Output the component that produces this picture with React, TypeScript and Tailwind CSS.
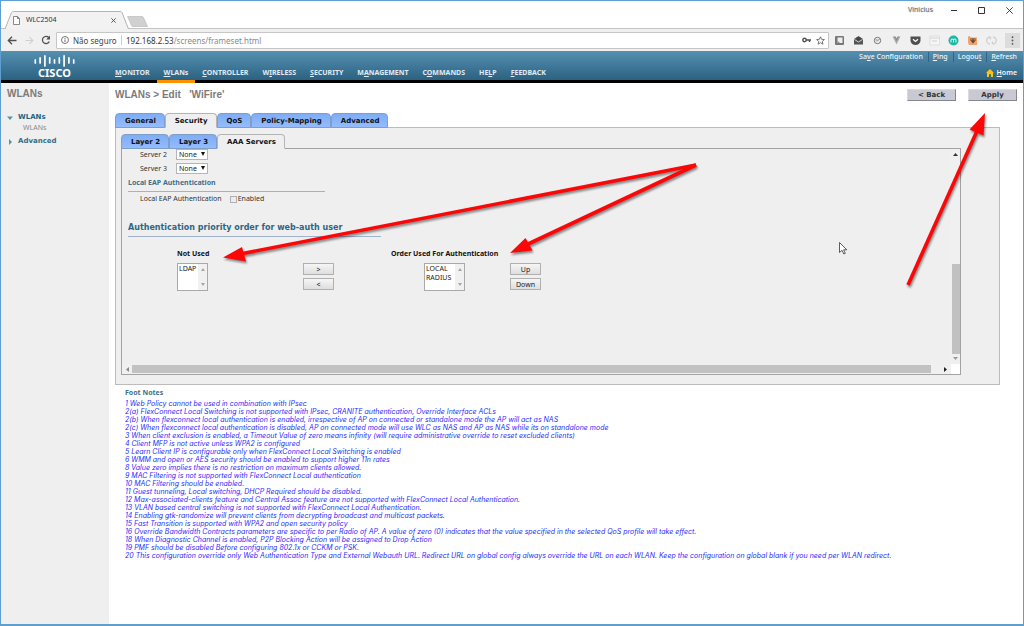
import type { ReactNode } from "react";

const sans = "font-['Noto_Sans','Open_Sans',sans-serif]";
const wide = "font-['DejaVu_Sans',sans-serif]";

function Accel({ text, at }: { text: string; at: number }) {
  return (
    <>
      {text.slice(0, at)}
      <u>{text[at]}</u>
      {text.slice(at + 1)}
    </>
  );
}

function IconButton({ label, children, className = "" }: { label: string; children: ReactNode; className?: string }) {
  return (
    <button aria-label={label} className={`flex shrink-0 items-center justify-center ${className}`}>
      {children}
    </button>
  );
}

function TitleBar() {
  return (
    <div className="relative flex h-[27px] items-end bg-white">
      <div className="relative z-10 ml-1 -mb-px flex h-[18px] w-[124px] items-center pl-2 pr-3">
        <svg className="absolute inset-0 h-full w-full" viewBox="0 0 124 18" preserveAspectRatio="none" aria-hidden="true">
          <path d="M0 18 L6.500 1.500 Q7 .5 8.500 .5 H115 Q116.500 .5 117 1.500 L123.500 18" fill="#f2f2f2" stroke="#b4b4b4" />
        </svg>
        <svg className="relative h-[9px] w-[7px]" viewBox="0 0 7 9" aria-hidden="true">
          <path d="M.5.5H4.500L6.500 2.500V8.500H.5ZM4.500.5V2.500H6.500" fill="#fff" stroke="#6b6b6b" strokeWidth=".8" />
        </svg>
        <span className="relative ml-1.5 flex-1 text-[7px] leading-[10px] text-[#333]">WLC2504</span>
        <IconButton label="Close tab" className="relative h-2 w-2">
          <svg className="h-[5px] w-[5px]" viewBox="0 0 5 5"><path d="M.4.4 4.600 4.600M4.600.4.4 4.600" stroke="#555" /></svg>
        </IconButton>
      </div>
      <IconButton label="New tab" className="mb-px ml-[-2px] h-[11px] w-[21px]">
        <svg className="h-[11px] w-[21px]" viewBox="0 0 21 11">
          <path d="M.5.5H15Q16 .5 16.500 1.500L20.500 10.500H6Q5 10.500 4.500 9.500Z" fill="#d0d0d0" stroke="#bcbcbc" strokeWidth=".7" />
        </svg>
      </IconButton>
      <div className="mb-[12px] ml-auto flex items-center">
        <span className="mr-[18px] text-[7px] leading-[10px] text-[#666] [text-shadow:0_0_2px_#bbb]">Vinicius</span>
        <IconButton label="Minimize" className="h-3 w-[6px]">
          <svg className="h-[7px] w-[6px]" viewBox="0 0 6 7"><path d="M0 3.500H6" stroke="#333" /></svg>
        </IconButton>
        <IconButton label="Maximize" className="ml-[21px] h-3 w-[7px]">
          <svg className="h-[7px] w-[7px]" viewBox="0 0 7 7"><path d="M.5.5H6.500V6.500H.5Z" fill="none" stroke="#333" /></svg>
        </IconButton>
        <IconButton label="Close" className="ml-[21px] mr-[10px] h-3 w-[7px]">
          <svg className="h-[7px] w-[7px]" viewBox="0 0 7 7"><path d="M.3.3 6.700 6.700M6.700.3.3 6.700" stroke="#333" strokeWidth=".9" /></svg>
        </IconButton>
      </div>
    </div>
  );
}

const extensions: { label: string; art: ReactNode }[] = [
  { label: "Notes", art: <><rect x="1" y="1" width="9" height="9" rx="1" fill="#777" /><rect x="3.500" y="2.500" width="5" height="5.500" fill="#eee" /><path d="M3.500 5.500 6 8H3.500Z" fill="#999" /></> },
  { label: "Mail", art: <><path d="M1 4 5.500 1 10 4V9.500H1Z" fill="#555" /><path d="M1.500 4.500 5.500 7 9.500 4.500" fill="none" stroke="#eee" strokeWidth=".8" /><path d="M3.500 2.500H7.500V4.500L5.500 5.800 3.500 4.500Z" fill="#444" /></> },
  { label: "Speed", art: <><circle cx="5.500" cy="5.500" r="3.200" fill="none" stroke="#777" /><path d="M5 6.500 7.500 4M3.500 5H5.500" stroke="#777" strokeWidth=".9" /></> },
  { label: "Vue", art: <><path d="M1.500 1.500H4L5.500 4.500 7 1.500H9.500L5.500 9.500Z" fill="#aaa" /><path d="M3.200 1.500H4.500L5.500 3.500 6.500 1.500H7.800L5.500 6Z" fill="#888" /></> },
  { label: "Pocket", art: <><path d="M.5 1.500H10.500V5.500A5 4.500 0 0 1 .5 5.500Z" fill="#505050" /><path d="M3 4.200 5.500 6.500 8 4.200" fill="none" stroke="#fff" strokeWidth="1.200" /></> },
  { label: "Calendar", art: <><rect x="1" y="1" width="9.500" height="9" fill="#f6f6f6" stroke="#d4d4d4" strokeWidth=".6" /><path d="M1 3H10.500M3 6H8" stroke="#d0d0d0" /></> },
  { label: "Momentum", art: <><circle cx="5.500" cy="5.500" r="5" fill="#1bb8a4" /><path d="M3 7.500V5Q3 4 4.200 4T5.500 5V7.500M5.500 5Q5.500 4 6.800 4T8 5V7.500" fill="none" stroke="#fff" strokeWidth=".9" /></> },
  { label: "Postbox", art: <><path d="M1 1.500 2.500 1 4 2.500H10V10H2L1 8Z" fill="#eba56c" /><path d="M3.500 3.500H8.500V5.500L6 8.500 3.500 5.500Z" fill="#6b3d2a" /><path d="M4.300 4.800H5.300M6.700 4.800H7.700" stroke="#fff" strokeWidth=".8" /></> },
  { label: "Sync", art: <path d="M4.500 2A3.500 3.500 0 0 0 4 9M6.500 9A3.500 3.500 0 0 0 7 2M4.500 2V4.500M6.500 9V6.500" fill="none" stroke="#cfcfcf" strokeWidth="1.300" /> },
];

function Toolbar() {
  return (
    <div className="flex h-[23px] items-center border-t border-[#c4c4c4] bg-[#f0f0f0] pl-[5px] pr-[3px]">
      <IconButton label="Back" className="h-3 w-[11px]">
        <svg className="h-[9px] w-[10px]" viewBox="0 0 10 9"><path d="M9.500 4.500H1.500M5 .8 1.300 4.500 5 8.200" fill="none" stroke="#505050" strokeWidth="1.300" /></svg>
      </IconButton>
      <IconButton label="Forward" className="ml-[7px] h-3 w-[11px]">
        <svg className="h-[9px] w-[9px]" viewBox="0 0 10 9"><path d="M.5 4.500H8.500M5 .8 8.700 4.500 5 8.200" fill="none" stroke="#cfcfcf" strokeWidth="1.200" /></svg>
      </IconButton>
      <IconButton label="Reload" className="ml-[5px] h-3 w-[11px]">
        <svg className="h-[10px] w-[10px]" viewBox="0 0 10 10"><path d="M8.300 6.500A3.600 3.600 0 1 1 7.700 2.500" fill="none" stroke="#505050" strokeWidth="1.300" /><path d="M9 .6V4.400H5.200Z" fill="#505050" /></svg>
      </IconButton>
      <div className="ml-[5px] flex h-[17px] flex-1 items-center rounded-[1px] border border-[#c6c6c6] bg-white pl-1 pr-[3px] text-[8px] leading-[11px]">
        <svg className="h-[8px] w-[8px]" viewBox="0 0 8 8" aria-hidden="true">
          <circle cx="4" cy="4" r="3.500" fill="none" stroke="#555" strokeWidth=".8" /><path d="M4 3.500V6M4 2V2.900" stroke="#555" strokeWidth=".9" />
        </svg>
        <span className="ml-1 w-11 whitespace-nowrap text-[#444]">Não seguro</span>
        <span className="ml-1 h-[10px] w-px bg-[#ccc]" />
        <span className="ml-1 flex-1 text-[#333]">192.168.2.53<span className="text-[#8a8a8a]">/screens/frameset.html</span></span>
        <IconButton label="Saved passwords" className="h-3 w-[10px]">
          <svg className="h-[6px] w-[9px]" viewBox="0 0 9 6"><circle cx="2.500" cy="3" r="1.700" fill="none" stroke="#505050" strokeWidth="1.400" /><path d="M4 3H9M7.500 3V5" stroke="#505050" strokeWidth="1.400" /></svg>
        </IconButton>
        <IconButton label="Bookmark" className="ml-[5px] h-3 w-[9px]">
          <svg className="h-[9px] w-[9px]" viewBox="0 0 9 9"><path d="M4.500.8 5.600 3.300 8.400 3.600 6.300 5.400 6.900 8.200 4.500 6.700 2.100 8.200 2.700 5.400.6 3.600 3.400 3.300Z" fill="none" stroke="#555" strokeWidth=".8" /></svg>
        </IconButton>
      </div>
      <div className="ml-[5px] flex gap-2">
        {extensions.map((e) => (
          <IconButton key={e.label} label={e.label} className="h-[11px] w-[11px]">
            <svg className="h-[11px] w-[11px]" viewBox="0 0 11 11">{e.art}</svg>
          </IconButton>
        ))}
      </div>
      <IconButton label="Menu" className="ml-2 h-[15px] w-[15px] bg-[#dcdcdc]">
        <svg className="h-[9px] w-[3px]" viewBox="0 0 3 9"><circle cx="1.500" cy="1.200" r=".9" fill="#555" /><circle cx="1.500" cy="4.500" r=".9" fill="#555" /><circle cx="1.500" cy="7.800" r=".9" fill="#555" /></svg>
      </IconButton>
    </div>
  );
}

const navItems: [string, number][] = [
  ["MONITOR", 0], ["WLANs", 0], ["CONTROLLER", 0], ["WIRELESS", 1], ["SECURITY", 0],
  ["MANAGEMENT", 1], ["COMMANDS", 1], ["HELP", 2], ["FEEDBACK", 0],
];

const utilities: [string, number][] = [["Save Configuration", 2], ["Ping", 0], ["Logout", 5], ["Refresh", 0]];

const logoBars: [number, number][] = [[4, 8], [2, 8], [0, 11], [2, 8], [4, 8], [2, 8], [0, 11], [2, 8], [4, 8]];

function Header() {
  return (
    <header className="flex h-8 border-b-[3px] border-black bg-linear-to-b from-[#5590b0] to-[#2b6282] text-white">
      <div className="flex w-[107px] shrink-0 flex-col items-center pt-1">
        <svg className="h-[12px] w-[41px]" viewBox="0 0 41 12" aria-hidden="true">
          {logoBars.map(([y1, y2], i) => (
            <path key={i} d={`M${1.300 + i * 4.800} ${y1 + 0.900}V${y2}`} stroke="#fff" strokeWidth="1.700" strokeLinecap="round" />
          ))}
        </svg>
        <span className="text-[11px] font-bold leading-[12px]">CISCO</span>
      </div>
      <nav className="flex items-end text-[7px] font-bold">
        {navItems.map(([name, at]) => (
          <a key={name} href="#" className={`relative px-[7px] pb-[3px] leading-[9px] text-[#e0ebf2] ${name === "WLANs" ? "after:absolute after:inset-x-0 after:top-full after:h-[3px] after:bg-[#ff9000]" : ""}`}>
            <Accel text={name} at={at} />
          </a>
        ))}
      </nav>
      <div className="ml-auto flex flex-col items-end justify-between pb-[2px] pr-[6px] pt-[1px] text-[7px] font-medium leading-[10px] text-[#f0f6fa]">
        <div className="flex">
          {utilities.map(([name, at], i) => (
            <a key={name} href="#" className={i > 0 ? "ml-[5px] border-l border-[#2f6484] pl-[4px]" : ""}>
              <Accel text={name} at={at} />
            </a>
          ))}
        </div>
        <a href="#" className="flex items-center gap-[3px] font-semibold">
          <svg className="h-[8px] w-[8px]" viewBox="0 0 8 8" aria-hidden="true"><path d="M4 0 7.800 3.800 7 4.500V8H5V5.200H3V8H1V4.500L.2 3.800Z" fill="#ffc20e" /></svg>
          <span><Accel text="Home" at={0} /></span>
        </a>
      </div>
    </header>
  );
}

function Sidebar() {
  return (
    <aside className={`w-[108px] shrink-0 bg-[#efefef] pl-[6px] pt-[5px] ${wide}`}>
      <h2 className="font-['Liberation_Sans',sans-serif] text-[10px] font-bold leading-[12px] text-[#7b7b7b]">WLANs</h2>
      <nav className="mt-3 text-[7px] leading-[11px]">
        <a href="#" className="flex items-center gap-[5px] font-bold text-[#1f6583]">
          <svg className="h-[6px] w-[6px]" viewBox="0 0 6 6" aria-hidden="true"><path d="M0 1.500H6L3 5Z" fill="#5295a8" /></svg>
          WLANs
        </a>
        <a href="#" className={`block pl-4 leading-[10px] text-[#888] ${sans}`}>WLANs</a>
        <a href="#" className="mt-[3px] flex items-center gap-[5px] font-bold text-[#2f6f8b]">
          <svg className="h-[6px] w-[6px]" viewBox="0 0 6 6" aria-hidden="true"><path d="M2 0 5 3 2 6Z" fill="#5295a8" /></svg>
          Advanced
        </a>
      </nav>
    </aside>
  );
}

function Tabs({ items, active, label }: { items: string[]; active: string; label: string }) {
  return (
    <div role="tablist" aria-label={label} className={`relative z-10 -mb-px flex text-[7px] font-bold leading-[9px] ${wide}`}>
      {items.map((t) => (
        <button
          key={t}
          role="tab"
          aria-selected={t === active}
          className={`h-[15px] rounded-t-[4px] border pl-[9px] pr-2 pt-px text-[#111] ${t === active ? "border-[#b5b5b5] border-b-[#efefef] bg-[#efefef]" : "border-[#7f9fc9] bg-linear-to-b from-[#7fadf5] to-[#94bbff]"}`}
        >
          {t}
        </button>
      ))}
    </div>
  );
}

function ServerRow({ id, label }: { id: string; label: string }) {
  return (
    <div className="flex h-[11px] items-center pl-3">
      <label htmlFor={id} className="w-9">{label}</label>
      <div className="relative">
        <select id={id} className="block h-[11px] w-8 appearance-none border border-[#b5b5b5] bg-white pl-[2px] text-[7px] leading-[9px] text-[#222]">
          <option>None</option>
        </select>
        <svg className="pointer-events-none absolute right-[3px] top-[3px] h-[4px] w-[4px]" viewBox="0 0 4 4" aria-hidden="true"><path d="M0 0H4L2 4Z" fill="#111" /></svg>
      </div>
    </div>
  );
}

function ListBox({ label, options, className }: { label: string; options: string[]; className: string }) {
  return (
    <div className={`flex h-7 border border-[#a9a9a9] bg-white ${className}`}>
      <select multiple size={3} aria-label={label} className="h-full min-w-0 flex-1 appearance-none overflow-hidden p-0 text-[7px] leading-[8px] text-[#222] [scrollbar-width:none]">
        {options.map((o) => <option key={o} className="min-h-0 p-0 pl-px leading-[8px]">{o}</option>)}
      </select>
      <div className="flex w-[9px] shrink-0 flex-col items-center justify-between bg-[#f1f1f1] py-1">
        <svg className="h-[3px] w-[4px]" viewBox="0 0 4 3" aria-hidden="true"><path d="M0 3H4L2 0Z" fill="#a6a6a6" /></svg>
        <svg className="h-[3px] w-[4px]" viewBox="0 0 4 3" aria-hidden="true"><path d="M0 0H4L2 3Z" fill="#a6a6a6" /></svg>
      </div>
    </div>
  );
}

function SmallButton({ children }: { children: ReactNode }) {
  return (
    <button className="h-3 w-[31px] border border-[#b0b0b0] bg-linear-to-b from-[#f6f6f6] to-[#dedede] text-[7px] leading-[9px] text-[#222]">
      {children}
    </button>
  );
}

function AaaServers() {
  return (
    <div className="grid h-[227px] grid-cols-[1fr_9px] grid-rows-[1fr_10px] border border-[#a3a3a3] bg-[#efefef] text-[7px] text-[#333]">
      <div className={`min-w-0 overflow-hidden pl-[6px] leading-[10px] ${sans}`}>
        <div className="flex flex-col gap-[3px]">
          <ServerRow id="server2" label="Server 2" />
          <ServerRow id="server3" label="Server 3" />
        </div>
        <h3 className="mt-1 w-[197px] border-b border-[#9db6c4] pb-[3px] font-bold text-[#3d6f8b]">Local EAP Authentication</h3>
        <div className="mt-[2px] flex items-center pl-3">
          <span>Local EAP Authentication</span>
          <label className="ml-2 flex items-center gap-px">
            <input type="checkbox" className="h-[7px] w-[7px] appearance-none border border-[#b0b0b0] bg-[#ececec]" />
            Enabled
          </label>
        </div>
        <h3 className={`mt-[19px] w-[253px] border-b border-[#9fb3cf] pb-[3px] text-[8px] font-bold text-[#2f6685] ${wide}`}>Authentication priority order for web-auth user</h3>
        <div className="mt-3 grid grid-cols-[126px_88px_119px_31px] pl-[49px]">
          <div>
            <p className="whitespace-nowrap font-bold text-[#111]">Not Used</p>
            <ListBox label="Not Used" options={["LDAP"]} className="mt-1 w-[31px]" />
          </div>
          <div className="flex flex-col gap-[3px] pt-[14px]">
            <SmallButton>&gt;</SmallButton>
            <SmallButton>&lt;</SmallButton>
          </div>
          <div>
            <p className="whitespace-nowrap font-bold text-[#111]">Order Used For Authentication</p>
            <ListBox label="Order Used For Authentication" options={["LOCAL", "RADIUS"]} className="ml-[33px] mt-1 w-[41px]" />
          </div>
          <div className="flex flex-col gap-[3px] pt-[14px]">
            <SmallButton>Up</SmallButton>
            <SmallButton>Down</SmallButton>
          </div>
        </div>
      </div>
      <div className="flex flex-col items-center bg-[#f0f0f0] py-1">
        <svg className="h-[3px] w-[5px]" viewBox="0 0 5 3" aria-hidden="true"><path d="M0 3H5L2.500 0Z" fill="#333" /></svg>
        <div className="mb-[3px] mt-auto h-[90px] w-[8px] bg-[#c1c1c1]" />
        <svg className="h-[3px] w-[5px]" viewBox="0 0 5 3" aria-hidden="true"><path d="M0 0H5L2.500 3Z" fill="#999" /></svg>
      </div>
      <div className="flex items-center bg-[#f0f0f0] pl-1 pr-1">
        <svg className="h-[5px] w-[3px]" viewBox="0 0 3 5" aria-hidden="true"><path d="M3 0V5L0 2.500Z" fill="#888" /></svg>
        <div className="ml-[3px] mr-[13px] h-[8px] flex-1 bg-[#c1c1c1]" />
        <svg className="h-[5px] w-[3px]" viewBox="0 0 3 5" aria-hidden="true"><path d="M0 0V5L3 2.500Z" fill="#222" /></svg>
      </div>
      <div className="bg-white" />
    </div>
  );
}

const footNotes = [
  "1 Web Policy cannot be used in combination with IPsec",
  "2(a) FlexConnect Local Switching is not supported with IPsec, CRANITE authentication, Override Interface ACLs",
  "2(b) When flexconnect local authentication is enabled, irrespective of AP on connected or standalone mode the AP will act as NAS",
  "2(c) When flexconnect local authentication is disabled, AP on connected mode will use WLC as NAS and AP as NAS while its on standalone mode",
  "3 When client exclusion is enabled, a Timeout Value of zero means infinity (will require administrative override to reset excluded clients)",
  "4 Client MFP is not active unless WPA2 is configured",
  "5 Learn Client IP is configurable only when FlexConnect Local Switching is enabled",
  "6 WMM and open or AES security should be enabled to support higher 11n rates",
  "8 Value zero implies there is no restriction on maximum clients allowed.",
  "9 MAC Filtering is not supported with FlexConnect Local authentication",
  "10 MAC Filtering should be enabled.",
  "11 Guest tunneling, Local switching, DHCP Required should be disabled.",
  "12 Max-associated-clients feature and Central Assoc feature are not supported with FlexConnect Local Authentication.",
  "13 VLAN based central switching is not supported with FlexConnect Local Authentication.",
  "14 Enabling gtk-randomize will prevent clients from decrypting broadcast and multicast packets.",
  "15 Fast Transition is supported with WPA2 and open security policy",
  "16 Override Bandwidth Contracts parameters are specific to per Radio of AP. A value of zero (0) indicates that the value specified in the selected QoS profile will take effect.",
  "18 When Diagnostic Channel is enabled, P2P Blocking Action will be assigned to Drop Action",
  "19 PMF should be disabled Before configuring 802.1x or CCKM or PSK.",
  "20 This configuration override only Web Authentication Type and External Webauth URL. Redirect URL on global config always override the URL on each WLAN. Keep the configuration on global blank if you need per WLAN redirect.",
];

function ActionButton({ children }: { children: ReactNode }) {
  return (
    <button className={`h-3 w-[49px] border border-[#d9dae2] border-b-[#85868e] border-r-[#85868e] bg-[#c8c9d3] text-[7px] font-bold leading-[9px] text-[#333] ${wide}`}>
      {children}
    </button>
  );
}

function Annotations() {
  return (
    <svg className="pointer-events-none absolute -left-px -top-px z-20 h-[626px] w-[1024px]" viewBox="0 0 1024 626" aria-hidden="true">
      <g fill="#fb0707" stroke="#fb0707" className="drop-shadow-[1px_2px_1px_rgba(0,0,0,0.45)]">
        <path d="M696 165 240 254" strokeWidth="3.600" />
        <path d="M223 257.500 242 247 246 261.500Z" stroke="none" />
        <path d="M696 165 526 245" strokeWidth="3.600" />
        <path d="M510 253 525.500 238 532.500 250.500Z" stroke="none" />
        <path d="M908 285 977 131" strokeWidth="3.600" />
        <path d="M985 113 969.500 129.500 983.500 135.500Z" stroke="none" />
      </g>
      <path d="M839.500 242.500V252.500L842 250.300 843.800 254 845.300 253.300 843.600 249.800H846.800Z" fill="#fff" stroke="#333" strokeWidth=".8" />
    </svg>
  );
}

export default function App() {
  return (
    <div className={`relative flex min-h-screen flex-col overflow-hidden border border-b-2 border-[#5f9fd0] bg-white ${sans}`}>
      <TitleBar />
      <Toolbar />
      <Header />
      <div className="flex flex-1">
        <Sidebar />
        <main className="min-w-0 flex-1 pl-[6px]">
          <div className="flex pr-[6px] pt-[6px]">
            <h1 className="whitespace-pre font-['Liberation_Sans',sans-serif] text-[10px] font-bold leading-[12px] text-[#7b7b7b]">WLANs &gt; Edit   'WiFire'</h1>
            <div className="ml-auto flex gap-3">
              <ActionButton>&lt; Back</ActionButton>
              <ActionButton>Apply</ActionButton>
            </div>
          </div>
          <div className="mr-[23px] mt-3">
            <Tabs label="WLAN settings" items={["General", "Security", "QoS", "Policy-Mapping", "Advanced"]} active="Security" />
            <div className="border border-[#bcbcbc] bg-[#efefef] pb-[9px] pl-[5px] pr-[38px] pt-[6px]">
              <Tabs label="Security settings" items={["Layer 2", "Layer 3", "AAA Servers"]} active="AAA Servers" />
              <AaaServers />
            </div>
          </div>
          <section className="pb-[60px] pl-[10px] pt-[3px]">
            <h2 className="text-[7px] font-bold leading-[10px] text-[#3d6f8b]">Foot Notes</h2>
            <ul className="mt-[2px] whitespace-nowrap font-['Inter','DejaVu_Sans',sans-serif] text-[7px] italic leading-[8px] text-[#2a2aff]">
              {footNotes.map((n) => <li key={n}>{n}</li>)}
            </ul>
          </section>
        </main>
      </div>
      <Annotations />
    </div>
  );
}
